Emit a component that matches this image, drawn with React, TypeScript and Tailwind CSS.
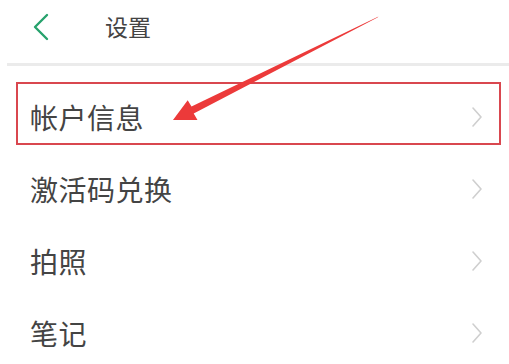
import React from 'react'

const items = ['帐户信息', '激活码兑换', '拍照', '笔记']

function Chevron() {
  return (
    <svg width="12" height="22" viewBox="0 0 12 22" fill="none">
      <path d="M2 2 L10 11 L2 20" stroke="#cfcfcf" strokeWidth="1.6" strokeLinecap="round" strokeLinejoin="round" />
    </svg>
  )
}

export default function App() {
  return (
    <div className="relative w-[509px] h-[364px] overflow-hidden bg-white" style={{ fontFamily: '"Noto Sans CJK SC", "Noto Sans", sans-serif' }}>
      {/* header */}
      <div className="flex items-center h-[63px] pl-[32px]">
        <svg width="18" height="28" viewBox="0 0 18 28" fill="none" className="mb-[10px]">
          <path d="M15 2 L3 14 L15 26" stroke="#27a26d" strokeWidth="2.4" strokeLinecap="round" strokeLinejoin="round" />
        </svg>
        <span className="ml-[55px] mb-[10px] text-[23px] leading-none text-[#444]">设置</span>
      </div>
      <div className="ml-[7px] h-[3px] bg-[#ebebeb]" />

      {/* list */}
      <div className="mt-[15px] flex flex-col">
        {items.map((t, i) => (
          <div key={t} className="relative flex items-center justify-between h-[72px] pl-[30px] pr-[26px]">
            <span className="text-[28px] leading-none text-[#444] tracking-[0.5px]">{t}</span>
            <Chevron />
            {i === 0 && (
              <div className="absolute left-[16px] right-[8px] top-[1px] h-[63px] border-2 border-[#d9474f]" />
            )}
          </div>
        ))}
      </div>

      {/* annotation arrow */}
      <svg className="absolute left-0 top-0 pointer-events-none" width="509" height="364" viewBox="0 0 509 364">
        <polygon
          points="173,120 187.7,100.3 191.5,106.6 378.5,16.5 377.5,17.5 193.7,113.4 197.5,119.9"
          fill="#ec3a3a"
        />
      </svg>
    </div>
  )
}
